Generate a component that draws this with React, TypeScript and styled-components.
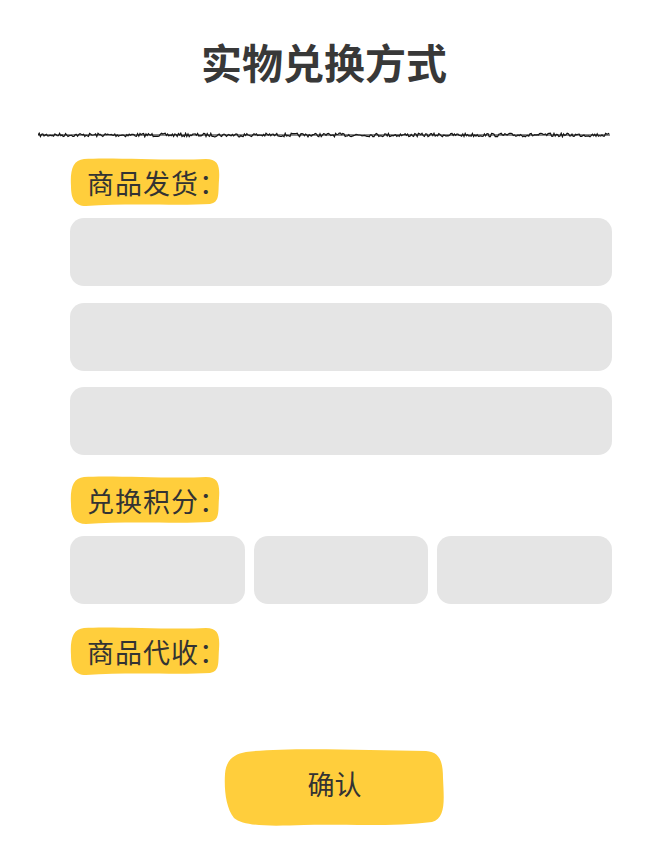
import React from "react";
import styled, { createGlobalStyle } from "styled-components";

const GlobalStyle = createGlobalStyle`
  html, body { margin: 0; padding: 0; background: #ffffff; }
  body { font-family: "Noto Sans CJK SC", "Noto Sans", sans-serif; color: #333333; }
`;

const Page = styled.div`
  width: 656px;
  min-height: 866px;
  padding-top: 37px;
  box-sizing: border-box;
  display: flex;
  flex-direction: column;
`;

const Title = styled.h1`
  margin: 0;
  padding-right: 8px;
  height: 48px;
  line-height: 48px;
  text-align: center;
  font-size: 41px;
  font-weight: 700;
  color: #383838;
`;

const Divider = styled.svg`
  display: block;
  margin: 47px 0 0 38px;
  width: 574px;
  height: 6px;
`;

const Form = styled.div`
  padding: 0 44px 0 70px;
  display: flex;
  flex-direction: column;
`;

const Label = styled.div<{ $top: number }>`
  position: relative;
  align-self: flex-start;
  margin-top: ${(p) => p.$top}px;
  width: 150px;
  height: 49px;
  display: flex;
  align-items: center;
  padding-left: 17px;
  box-sizing: border-box;
  font-size: 27px;
  letter-spacing: 1px;
  color: #333333;
  line-height: 1;
  white-space: nowrap;
`;

const Blob = styled.svg`
  position: absolute;
  inset: 0;
  width: 100%;
  height: 100%;
  z-index: 0;
`;

const LabelText = styled.span`
  position: relative;
  z-index: 1;
`;

const Fields = styled.div`
  margin-top: 11px;
  display: flex;
  flex-direction: column;
  gap: 16.5px;
`;

const Field = styled.div`
  height: 68px;
  border-radius: 14px;
  background: #e5e5e5;
`;

const Row = styled.div`
  margin-top: 11px;
  display: grid;
  grid-template-columns: repeat(3, 1fr);
  gap: 9px;
`;

const Button = styled.button`
  position: relative;
  margin: 72px 0 0 224px;
  width: 221px;
  height: 79px;
  border: none;
  background: transparent;
  padding: 0 0 9px;
  font-family: "Noto Sans CJK SC", "Noto Sans", sans-serif;
  font-size: 27px;
  color: #333333;
  display: flex;
  align-items: center;
  justify-content: center;
  cursor: pointer;
`;

const YELLOW = "#ffce3c";

const LabelBlob = () => (
  <Blob viewBox="0 0 150 49" preserveAspectRatio="none">
    <path
      d="M14 1 C40 -1, 100 3, 136 1 C148 1, 150 8, 149 22 C148 36, 150 44, 140 46 C110 48, 60 45, 16 48 C4 48, 1 40, 1 28 C0 12, 3 2, 14 1 Z"
      fill={YELLOW}
    />
  </Blob>
);

const ButtonBlob = () => (
  <Blob viewBox="0 0 221 79" preserveAspectRatio="none">
    <path
      d="M22 4 C60 -1, 140 2, 202 3 C216 4, 219 14, 219 30 C220 52, 222 70, 208 74 C170 79, 120 76, 80 77 C50 78, 20 79, 10 70 C2 60, 0 42, 1 26 C2 12, 10 6, 22 4 Z"
      fill={YELLOW}
    />
  </Blob>
);

function scribble(): string {
  let seed = 7;
  const rnd = () => {
    seed = (seed * 16807) % 2147483647;
    return (seed - 1) / 2147483646;
  };
  let d = "M0 3";
  for (let x = 1.2; x <= 572; x += 1.2) {
    d += ` L${x.toFixed(1)} ${(1.2 + rnd() * 3.6).toFixed(2)}`;
  }
  return d;
}

const scribblePath = scribble();

function LabelChip({ text, top }: { text: string; top: number }) {
  return (
    <Label $top={top}>
      <LabelBlob />
      <LabelText>{text}</LabelText>
    </Label>
  );
}

export default function App() {
  return (
    <>
      <GlobalStyle />
      <Page>
        <Title>实物兑换方式</Title>
        <Divider viewBox="0 0 574 6">
          <path d={scribblePath} fill="none" stroke="#111" strokeWidth="1.2" />
          <path d="M0 3 L572 3" stroke="#222" strokeWidth="1.6" opacity="0.7" />
        </Divider>
        <Form>
          <LabelChip text="商品发货：" top={20} />
          <Fields>
            <Field />
            <Field />
            <Field />
          </Fields>
          <LabelChip text="兑换积分：" top={21} />
          <Row>
            <Field />
            <Field />
            <Field />
          </Row>
          <LabelChip text="商品代收：" top={23} />
        </Form>
        <Button>
          <ButtonBlob />
          <LabelText>确认</LabelText>
        </Button>
      </Page>
    </>
  );
}
